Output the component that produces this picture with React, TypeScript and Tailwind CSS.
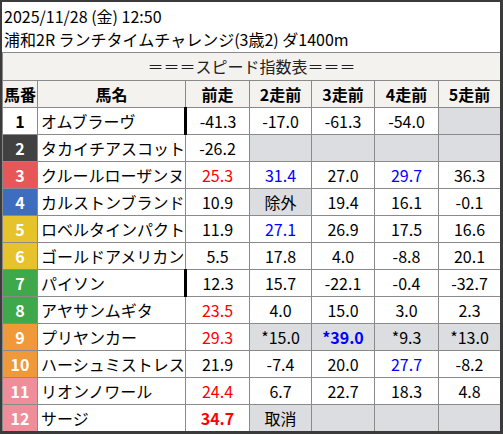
import React from "react";

type Cell = {
  v?: string;
  c?: "red" | "blue";
  b?: boolean;
  gray?: boolean;
};

type Row = {
  no: number;
  name: string;
  frame: string;
  mark?: boolean;
  cells: Cell[];
};

const frames: Record<number, string> = {
  1: "bg-white text-black",
  2: "bg-[#414141] text-white",
  3: "bg-[#e75757] text-white",
  4: "bg-[#3e6cbf] text-white",
  5: "bg-[#e6c22c] text-white",
  6: "bg-[#e6c22c] text-white",
  7: "bg-[#3ea84b] text-white",
  8: "bg-[#3ea84b] text-white",
  9: "bg-[#ef993a] text-white",
  10: "bg-[#ef993a] text-white",
  11: "bg-[#f08d9b] text-white",
  12: "bg-[#f08d9b] text-white",
};

const G: Cell = { gray: true };

const rows: Row[] = [
  { no: 1, name: "オムブラーヴ", frame: frames[1], mark: true, cells: [{ v: "-41.3" }, { v: "-17.0" }, { v: "-61.3" }, { v: "-54.0" }, G] },
  { no: 2, name: "タカイチアスコット", frame: frames[2], cells: [{ v: "-26.2" }, G, G, G, G] },
  { no: 3, name: "クルールローザンヌ", frame: frames[3], cells: [{ v: "25.3", c: "red" }, { v: "31.4", c: "blue" }, { v: "27.0" }, { v: "29.7", c: "blue" }, { v: "36.3" }] },
  { no: 4, name: "カルストンブランド", frame: frames[4], cells: [{ v: "10.9" }, { v: "除外", gray: true }, { v: "19.4" }, { v: "16.1" }, { v: "-0.1" }] },
  { no: 5, name: "ロベルタインパクト", frame: frames[5], cells: [{ v: "11.9" }, { v: "27.1", c: "blue" }, { v: "26.9" }, { v: "17.5" }, { v: "16.6" }] },
  { no: 6, name: "ゴールドアメリカン", frame: frames[6], cells: [{ v: "5.5" }, { v: "17.8" }, { v: "4.0" }, { v: "-8.8" }, { v: "20.1" }] },
  { no: 7, name: "パイソン", frame: frames[7], mark: true, cells: [{ v: "12.3" }, { v: "15.7" }, { v: "-22.1" }, { v: "-0.4" }, { v: "-32.7" }] },
  { no: 8, name: "アヤサンムギタ", frame: frames[8], cells: [{ v: "23.5", c: "red" }, { v: "4.0" }, { v: "15.0" }, { v: "3.0" }, { v: "2.3" }] },
  { no: 9, name: "プリヤンカー", frame: frames[9], cells: [{ v: "29.3", c: "red" }, { v: "*15.0", gray: true }, { v: "*39.0", c: "blue", b: true, gray: true }, { v: "*9.3", gray: true }, { v: "*13.0", gray: true }] },
  { no: 10, name: "ハーシュミストレス", frame: frames[10], cells: [{ v: "21.9" }, { v: "-7.4" }, { v: "20.0" }, { v: "27.7", c: "blue" }, { v: "-8.2" }] },
  { no: 11, name: "リオンノワール", frame: frames[11], cells: [{ v: "24.4", c: "red" }, { v: "6.7" }, { v: "22.7" }, { v: "18.3" }, { v: "4.8" }] },
  { no: 12, name: "サージ", frame: frames[12], cells: [{ v: "34.7", c: "red", b: true }, { v: "取消", gray: true }, G, G, G] },
];

const headers = ["馬番", "馬名", "前走", "2走前", "3走前", "4走前", "5走前"];

function cellClass(c: Cell, i: number, mark?: boolean) {
  const color = c.c === "red" ? "text-[#ff0000]" : c.c === "blue" ? "text-[#0000ff]" : "text-black";
  const bg = c.gray ? "bg-[#dcdde1]" : "bg-white";
  const weight = c.b ? "font-bold" : "font-normal";
  const left = i === 0 && mark ? "border-l-[3px] border-l-black" : "";
  return `border border-[#8a8a8a] text-center p-0 ${color} ${bg} ${weight} ${left}`;
}

export default function App() {
  return (
    <div
      className="w-[503px] h-[434px] bg-white border-t-2 border-l-2 border-r-[3px] border-b-[3px] border-[#3b3b3b] overflow-hidden text-[16px] text-black"
      style={{ fontFamily: '"Noto Sans CJK JP", "Noto Sans", sans-serif' }}
    >
      <div className="h-[51px] pl-[2px] pt-[3px] leading-[23px] border-b border-[#8a8a8a]">
        <div>2025/11/28 (金) 12:50</div>
        <div>浦和2R ランチタイムチャレンジ(3歳2) ダ1400m</div>
      </div>
      <table className="table-fixed border-collapse w-[498px] leading-[20px]">
        <colgroup>
          <col className="w-[35px]" />
          <col className="w-[148px]" />
          <col className="w-[64px]" />
          <col className="w-[62px]" />
          <col className="w-[63px]" />
          <col className="w-[64px]" />
          <col className="w-[62px]" />
        </colgroup>
        <tbody>
          <tr className="h-[27px] bg-[#f3f2ee]">
            <td colSpan={7} className="border-x border-b border-[#8a8a8a] text-center p-0 text-[#222]">
              ＝＝＝スピード指数表＝＝＝
            </td>
          </tr>
          <tr className="h-[27px] bg-[#f3f2ee]">
            {headers.map((h) => (
              <td key={h} className="border border-[#8a8a8a] text-center font-bold p-0">
                {h}
              </td>
            ))}
          </tr>
          {rows.map((r) => (
            <tr key={r.no} className="h-[27px]">
              <td className={`border border-[#8a8a8a] text-center font-bold p-0 ${r.frame}`}>{r.no}</td>
              <td className="border border-[#8a8a8a] text-left pl-[3px] p-0 bg-white whitespace-nowrap overflow-hidden">
                {r.name}
              </td>
              {r.cells.map((c, i) => (
                <td key={i} className={cellClass(c, i, r.mark)}>
                  {c.v ?? ""}
                </td>
              ))}
            </tr>
          ))}
        </tbody>
      </table>
    </div>
  );
}
